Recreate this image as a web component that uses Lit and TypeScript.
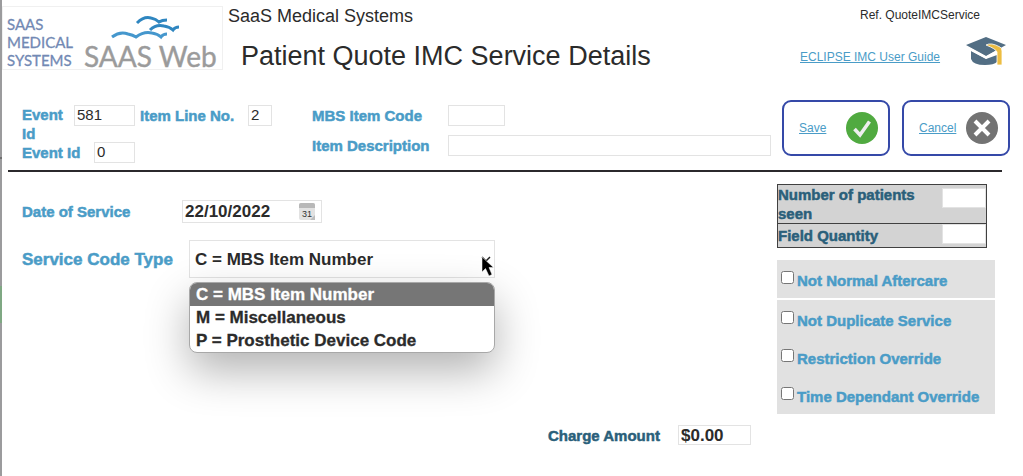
import { LitElement, html, css } from "lit";
import { customElement, state } from "lit/decorators.js";

const SERVICE_TYPES = [
  { code: "C", text: "C = MBS Item Number" },
  { code: "M", text: "M = Miscellaneous" },
  { code: "P", text: "P = Prosthetic Device Code" },
];

const OVERRIDES = ["Not Duplicate Service", "Restriction Override", "Time Dependant Override"];

@customElement("app-root")
export class AppRoot extends LitElement {
  @state() private selected = "C";

  static styles = css`
    :host {
      display: block;
      min-height: 100vh;
      box-sizing: border-box;
      padding-left: 2px;
      background:
        linear-gradient(#6f6f70, #6f6f70) 0 157px / 2px 2px no-repeat,
        linear-gradient(#7fa883, #7fa883) 0 286px / 2px 37px no-repeat,
        linear-gradient(#9b9b9d, #9b9b9d) 0 0 / 2px 100% no-repeat,
        #fff;
      color: #2b2b2b;
      font: 15px/20px "Liberation Sans", Arial, sans-serif;
    }
    * { box-sizing: border-box; }
    a { color: #4a9cc7; font-size: 12px; text-decoration: underline; }
    label {
      color: #4a9cc7;
      font: 700 15px/19px "Liberation Sans", Arial, sans-serif;
      -webkit-text-stroke: 0.5px currentColor;
    }
    input, select {
      font: inherit;
      color: inherit;
      border: 1px solid #e3e3e3;
      border-radius: 0;
      background: #fff;
      margin: 0;
      outline: none;
    }
    input { height: 21px; padding: 0 2px; min-width: 0; }

    header { display: flex; height: 90px; }
    .logo { flex: none; margin-top: 6px; width: 221px; height: 64px; overflow: visible; }
    .titles { flex: 1; padding: 6px 0 0 5px; white-space: nowrap; }
    .company { margin: 0; font-size: 18px; line-height: 20px; }
    h1 { margin: 14px 0 0 13px; font-weight: 400; font-size: 27px; line-height: 32px; }
    .guide { display: grid; grid-template-columns: 166px 40px; grid-template-rows: 20px 1fr; padding: 5px 17px 0 0; }
    .ref { grid-column: 1 / 3; margin: 0 0 0 60px; font-size: 12px; line-height: 20px; }
    .guide a { line-height: 16px; padding-top: 24px; }
    .cap { width: 40px; height: 30px; margin-top: 12px; }

    .bar { display: flex; align-items: flex-start; padding: 15px 13px 0 20px; height: 80px; }
    .ids { display: grid; row-gap: 4px; width: 290px; flex: none; }
    .row { display: flex; align-items: flex-start; }
    .w-event { width: 52px; }
    .w-event2 { width: 72px; padding-top: 1px; }
    .w-line { width: 113px; padding: 1px 0 0 5px; white-space: nowrap; }
    .i-event { width: 61px; }
    .i-line { width: 24px; }
    .i-zero { width: 41px; }
    .ids .row + .row { margin-top: -5px; }
    .ids input { padding-bottom: 2px; }
    .item { flex: 1; display: grid; grid-template-columns: 136px 1fr; row-gap: 9px; align-items: center; }
    .i-code { width: 57px; }
    .i-desc { width: 100%; }
    .actions { display: flex; gap: 12px; margin: -5px 0 0 11px; }
    .action {
      display: flex; align-items: center; justify-content: space-between;
      width: 108px; height: 56px; padding: 0 10px 0 15px;
      border: 2px solid #3549a8; border-radius: 9px; background: #fff;
      color: #4a9cc7; font: 12px "Liberation Sans", Arial, sans-serif;
      text-decoration: underline;
    }
    .action svg { width: 32px; height: 32px; }
    hr { margin: 0 21px 0 6px; border: 0; height: 2px; background: #2b292c; }

    main { display: grid; grid-template-columns: 1fr 218px; column-gap: 26px; padding: 12px 28px 0 20px; }
    .form { display: flex; flex-direction: column; }
    .date { align-items: center; margin-top: 16px; }
    .date label { width: 160px; }
    .datebox { display: flex; align-items: center; width: 140px; height: 23px; border: 1px solid #e3e3e3; padding-right: 6px; }
    .datebox input { flex: 1; border: 0; height: 20px; }
    .datebox input, .amount input, select, .menu {
      font: 700 17px/23px "Liberation Sans", Arial, sans-serif;
    }
    .datebox svg { width: 16px; height: 17px; flex: none; }
    .type { align-items: center; margin-top: 17px; }
    .type > label { width: 167px; font-size: 17px; white-space: nowrap; }
    .picker { position: relative; width: 306px; }
    select { display: block; width: 100%; height: 38px; padding: 0 5px; appearance: none; }
    .chevron { position: absolute; right: 4px; top: 15px; width: 10px; height: 8px; }
    .pointer { position: absolute; right: 1px; top: 16px; width: 13px; height: 21px; z-index: 2; }
    .menu {
      position: absolute; top: 42px; left: 0; right: 0; margin: 0; padding: 0; list-style: none;
      border: 1px solid #a8a8a8; border-radius: 8px; background: #fff; overflow: hidden;
      box-shadow: 0 18px 44px rgba(0, 0, 0, 0.3);
      -webkit-text-stroke: 0.3px currentColor;
    }
    .menu li { padding: 0 6px; }
    .menu .on { background: #767676; color: #fff; }
    .amount { justify-content: flex-end; align-items: center; margin-top: 147px; }
    .amount label { color: #2a5f7a; width: 130px; }
    .amount input { width: 73px; height: 20px; }

    table { width: 210px; border-collapse: collapse; background: #d3d3d3; }
    tr { border: 1px solid #404040; }
    th { padding: 0; text-align: left; vertical-align: top; }
    th label { display: block; color: #2a5f7a; }
    td { width: 45px; padding: 0; vertical-align: top; }
    td input { display: block; width: 44px; height: 20px; }
    .seen td { padding-top: 3px; }
    .qty th { padding: 2px 0; }
    .checks { background: #e1e1e1; margin-top: 2px; }
    .checks.first { margin-top: 12px; }
    .check { display: flex; align-items: flex-start; height: 38px; padding: 11px 0 0 4px; }
    .check input { width: 13px; height: 13px; margin-right: 3px; flex: none; }
    .check label { white-space: nowrap; }
  `;

  private pick(e: Event) {
    this.selected = (e.target as HTMLSelectElement).value;
  }

  private check(text: string, id: string) {
    return html`<div class="check"><input type="checkbox" id=${id} /><label for=${id}>${text}</label></div>`;
  }

  render() {
    return html`
      <header>
        <svg class="logo" viewBox="0 0 221 64" role="img" aria-label="SAAS Medical Systems, SAAS Web">
          <rect x="0.5" y="0.5" width="220" height="63" fill="#fff" stroke="#f0f0f0" />
          <g fill="#7289b4" stroke="#7289b4" stroke-width="0.3" font-family="Lato" font-size="15">
            <text x="5" y="24">SAAS</text>
            <text x="5" y="42">MEDICAL</text>
            <text x="5" y="60">SYSTEMS</text>
          </g>
          <text x="82" y="61" fill="#9b9b9b" stroke="#9b9b9b" stroke-width="0.4" font-family="Lato" font-size="28">SAAS Web</text>
          <g fill="none" stroke-width="3">
            <path d="M135 17 Q142 10 149 12 Q154 13 157 16 Q160 14 165 14" stroke="#2f86c0" />
            <path d="M148 24 Q154 18 162 20 Q168 21 171 24 Q173 21 177 21" stroke="#2f86c0" />
            <path d="M110 31 Q118 25 126 28 Q131 29 134 31 Q142 25 150 27 Q156 28 159 31 Q161 28 165 28" stroke="#4597cd" />
          </g>
        </svg>
        <div class="titles">
          <p class="company">SaaS Medical Systems</p>
          <h1>Patient Quote IMC Service Details</h1>
        </div>
        <div class="guide">
          <p class="ref">Ref. QuoteIMCService</p>
          <a href="#guide">ECLIPSE IMC User Guide</a>
          <svg class="cap" viewBox="0 0 40 30" aria-hidden="true">
            <path d="M5 14 L5 22 Q7 28 19 28 Q28 28 31 25 L31 18 L20 22Z" fill="#526e84" />
            <path d="M0 8 L20 0 L40 8 L20 19Z" fill="#526e84" />
            <path d="M2 11 L20 20.500 L32 13.500" fill="none" stroke="#fff" stroke-width="2" />
            <path d="M20 8 Q25 5 34 10 Q36 11 36 14 L36 28 L31 28 L31 15 Q30 12 20 8Z" fill="#edbd42" stroke="#fff" stroke-width="0.800" />
          </svg>
        </div>
      </header>

      <section class="bar">
        <div class="ids">
          <div class="row">
            <label class="w-event" for="event">Event Id</label>
            <input class="i-event" id="event" value="581" />
            <label class="w-line" for="line">Item Line No.</label>
            <input class="i-line" id="line" value="2" />
          </div>
          <div class="row">
            <label class="w-event2" for="event2">Event Id</label>
            <input class="i-zero" id="event2" value="0" />
          </div>
        </div>
        <div class="item">
          <label for="code">MBS Item Code</label><input class="i-code" id="code" />
          <label for="desc">Item Description</label><input class="i-desc" id="desc" />
        </div>
        <div class="actions">
          <button class="action">Save
            <svg viewBox="0 0 32 32" aria-hidden="true"><circle cx="16" cy="16" r="16" fill="#50aa40" /><path d="M8.500 17 L14 23 L23.500 9.500" fill="none" stroke="#eee" stroke-width="3.600" /></svg>
          </button>
          <button class="action">Cancel
            <svg viewBox="0 0 32 32" aria-hidden="true"><circle cx="16" cy="16" r="16" fill="#737373" /><path d="M9 9 L23 23 M23 9 L9 23" stroke="#fff" stroke-width="4" /></svg>
          </button>
        </div>
      </section>
      <hr />

      <main>
        <div class="form">
          <div class="row date">
            <label for="date">Date of Service</label>
            <div class="datebox">
              <input id="date" value="22/10/2022" />
              <svg viewBox="0 0 16 17" aria-hidden="true">
                <rect width="16" height="17" rx="2" fill="#e2e2e2" />
                <path d="M0 5 V2 Q0 0 2 0 H14 Q16 0 16 2 V5Z" fill="#b8b8b8" />
                <path d="M16 12 V17 H11Z" fill="#bdbdbd" />
                <text x="3" y="14" font-size="9" font-family="Liberation Sans" fill="#333">31</text>
              </svg>
            </div>
          </div>
          <div class="row type">
            <label for="type">Service Code Type</label>
            <div class="picker">
              <select id="type" .value=${this.selected} @change=${this.pick}>
                ${SERVICE_TYPES.map((t) => html`<option value=${t.code}>${t.text}</option>`)}
              </select>
              <svg class="chevron" viewBox="0 0 10 8" aria-hidden="true"><path d="M1 2 L5 6 L9 2" fill="none" stroke="#222" stroke-width="1.500" /></svg>
              <ul class="menu" role="listbox" aria-label="Service Code Type">
                ${SERVICE_TYPES.map(
                  (t) => html`<li role="option" class=${t.code === this.selected ? "on" : ""} aria-selected=${t.code === this.selected}>${t.text}</li>`
                )}
              </ul>
              <svg class="pointer" viewBox="0 0 13 21" aria-hidden="true"><path d="M1 1 V16 L4.500 12.500 L8 20 L11 18.500 L8 11.500 H12.500Z" fill="#000" stroke="#fff" stroke-width="0.500" /></svg>
            </div>
          </div>
          <div class="row amount">
            <label for="amount">Charge Amount</label>
            <input id="amount" value="$0.00" />
          </div>
        </div>

        <aside>
          <table>
            <tr class="seen">
              <th><label for="patients">Number of patients seen</label></th>
              <td><input id="patients" /></td>
            </tr>
            <tr class="qty">
              <th><label for="qty">Field Quantity</label></th>
              <td><input id="qty" /></td>
            </tr>
          </table>
          <div class="checks first">${this.check("Not Normal Aftercare", "aftercare")}</div>
          <div class="checks">${OVERRIDES.map((t, i) => this.check(t, "override" + i))}</div>
        </aside>
      </main>
    `;
  }
}
